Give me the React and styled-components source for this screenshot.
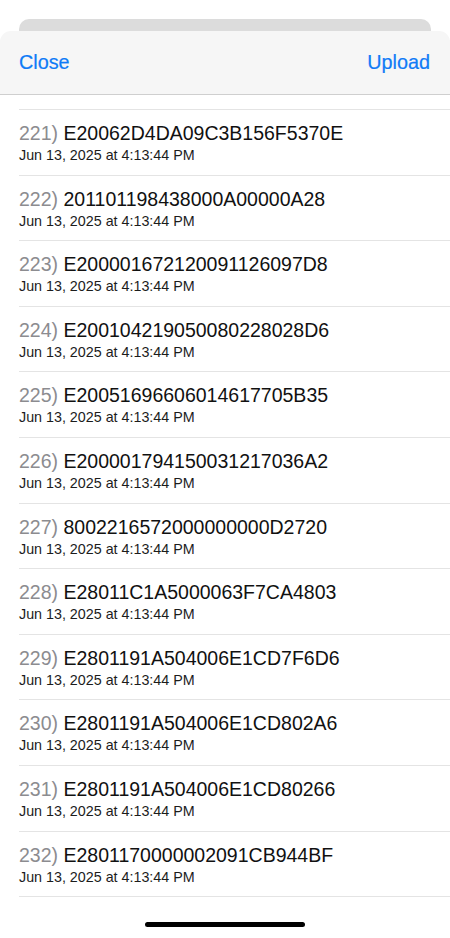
import React from "react";
import styled, { createGlobalStyle } from "styled-components";

const GlobalStyle = createGlobalStyle`
  html, body {
    margin: 0;
    padding: 0;
    background: #ffffff;
    font-family: "Liberation Sans", Arial, sans-serif;
  }
  #root {
    height: 938px;
  }
`;

const Screen = styled.div`
  height: 938px;
  display: flex;
  flex-direction: column;
  overflow: hidden;
  background: #ffffff;
`;

const BackCard = styled.div`
  height: 12px;
  margin: 19px 19px 0;
  background: #dcdcdc;
  border-radius: 10px 10px 0 0;
  flex-shrink: 0;
`;

const Sheet = styled.div`
  flex: 1;
  display: flex;
  flex-direction: column;
  min-height: 0;
  background: #ffffff;
  border-radius: 11px 11px 0 0;
  overflow: hidden;
`;

const NavBar = styled.div`
  height: 64px;
  flex-shrink: 0;
  display: flex;
  align-items: center;
  justify-content: space-between;
  padding: 0 20px 0 19px;
  background: #f6f6f6;
  border-bottom: 1px solid #cfcfcf;
  box-sizing: border-box;
`;

const NavButton = styled.button`
  border: 0;
  background: none;
  padding: 0;
  font-family: "Liberation Sans", Arial, sans-serif;
  font-size: 19.8px;
  color: #0f7bf6;
  cursor: pointer;
  -webkit-text-stroke: 0.2px #0f7bf6;
`;

const Viewport = styled.div`
  flex: 1;
  min-height: 0;
  overflow: hidden;
`;

const List = styled.ul`
  list-style: none;
  margin: 0;
  padding: 0;
  position: relative;
  &::before {
    content: "";
    display: block;
    height: 14px;
    margin-left: 19px;
    border-bottom: 1px solid #e4e4e4;
  }
`;

const Row = styled.li`
  height: 65.6px;
  box-sizing: border-box;
  padding: 11px 0 0 19px;
  display: flex;
  flex-direction: column;
  position: relative;
  &::after {
    content: "";
    position: absolute;
    left: 19px;
    right: 0;
    bottom: 0;
    height: 1px;
    background: #e4e4e4;
  }
`;

const IdLine = styled.div`
  font-size: 19.5px;
  line-height: 25px;
  color: #111111;
  white-space: nowrap;
`;

const Index = styled.span`
  color: #8c8c90;
`;

const DateLine = styled.div`
  font-size: 14.3px;
  line-height: 18px;
  color: #1c1c1c;
  white-space: nowrap;
`;

const HomeIndicator = styled.div`
  position: fixed;
  left: 145px;
  top: 922px;
  width: 160px;
  height: 5px;
  border-radius: 3px;
  background: #000000;
`;

const rows = [
  [221, "E20062D4DA09C3B156F5370E"],
  [222, "201101198438000A00000A28"],
  [223, "E200001672120091126097D8"],
  [224, "E200104219050080228028D6"],
  [225, "E20051696606014617705B35"],
  [226, "E200001794150031217036A2"],
  [227, "8002216572000000000D2720"],
  [228, "E28011C1A5000063F7CA4803"],
  [229, "E2801191A504006E1CD7F6D6"],
  [230, "E2801191A504006E1CD802A6"],
  [231, "E2801191A504006E1CD80266"],
  [232, "E2801170000002091CB944BF"],
];

export default function App() {
  return (
    <>
      <GlobalStyle />
      <Screen>
        <BackCard />
        <Sheet>
          <NavBar>
            <NavButton>Close</NavButton>
            <NavButton>Upload</NavButton>
          </NavBar>
          <Viewport>
            <List>
              {rows.map(([n, id]) => (
                <Row key={n}>
                  <IdLine>
                    <Index>{n})</Index> {id}
                  </IdLine>
                  <DateLine>Jun 13, 2025 at 4:13:44 PM</DateLine>
                </Row>
              ))}
            </List>
          </Viewport>
        </Sheet>
        <HomeIndicator />
      </Screen>
    </>
  );
}
